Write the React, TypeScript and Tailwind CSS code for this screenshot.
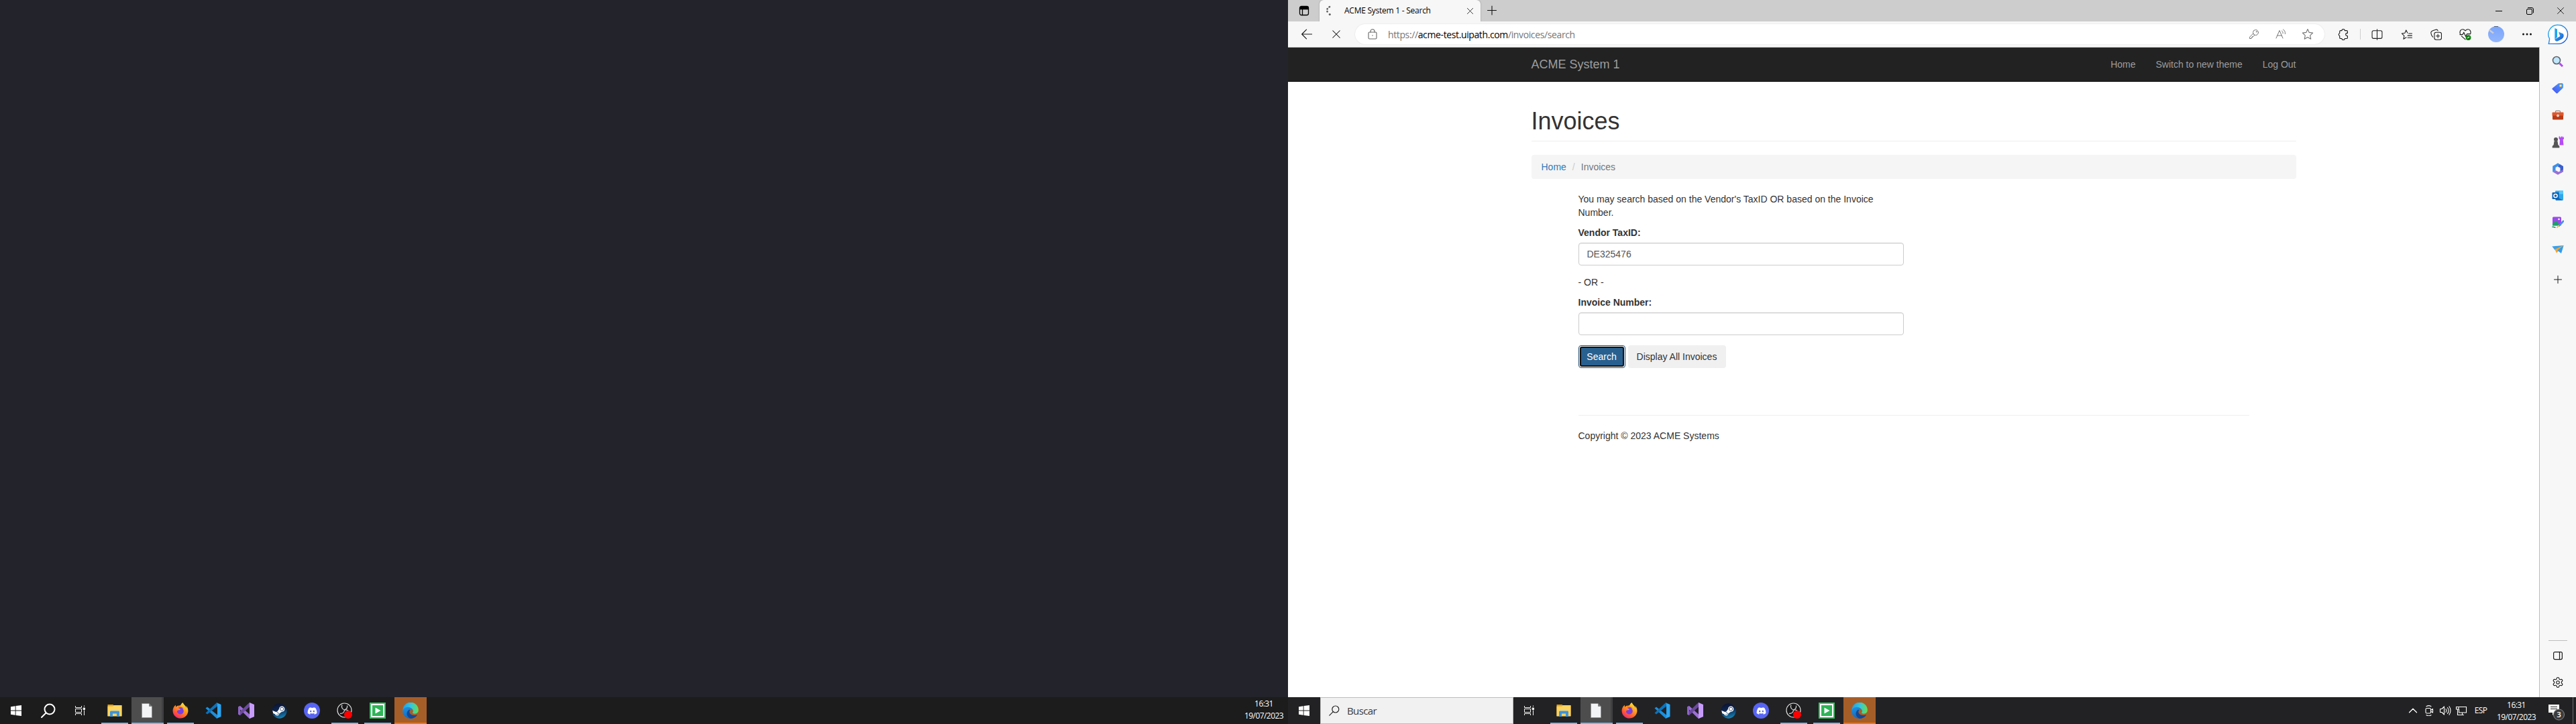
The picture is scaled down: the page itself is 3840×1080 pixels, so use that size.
import type { ReactNode } from "react";
import { FaDiscord, FaSteam, FaFirefoxBrowser } from "react-icons/fa";
import { Settings } from "lucide-react";

type SvgProps = { size?: number; children: ReactNode; color?: string; box?: number; w?: number };

function Line({ size = 16, box = 16, color = "#1b1b1b", w = 1, children }: SvgProps) {
  return (
    <svg width={size} height={size} viewBox={`0 0 ${box} ${box}`} fill="none" stroke={color} strokeWidth={w} strokeLinecap="round" strokeLinejoin="round">
      {children}
    </svg>
  );
}

function Art({ size = 24, box = 24, children }: SvgProps) {
  return (
    <svg width={size} height={size} viewBox={`0 0 ${box} ${box}`}>
      {children}
    </svg>
  );
}

function Gradients() {
  return (
    <svg width="0" height="0" className="absolute">
      <defs>
        <linearGradient id="edgeTop" x1="0" y1="0.4" x2="1" y2="0.5">
          <stop offset="0" stopColor="#1f9fe6" />
          <stop offset="0.5" stopColor="#35c6dc" />
          <stop offset="1" stopColor="#62de55" />
        </linearGradient>
        <linearGradient id="edgeLow" x1="0.2" y1="0" x2="0.6" y2="1">
          <stop offset="0" stopColor="#1d8fe0" />
          <stop offset="1" stopColor="#1565b8" />
        </linearGradient>
        <linearGradient id="fire" x1="0.8" y1="0" x2="0.2" y2="1">
          <stop offset="0" stopColor="#fff04a" />
          <stop offset="0.4" stopColor="#ff9a1f" />
          <stop offset="0.75" stopColor="#ff4f3a" />
          <stop offset="1" stopColor="#e8218a" />
        </linearGradient>
        <linearGradient id="steam" x1="0.3" y1="0" x2="0.6" y2="1">
          <stop offset="0" stopColor="#0c1230" />
          <stop offset="0.5" stopColor="#0d2a55" />
          <stop offset="1" stopColor="#1585b8" />
        </linearGradient>
        <linearGradient id="bing" x1="0" y1="0" x2="1" y2="1">
          <stop offset="0" stopColor="#37bdf5" />
          <stop offset="1" stopColor="#1b4fd0" />
        </linearGradient>
        <linearGradient id="tag" x1="1" y1="0" x2="0" y2="1">
          <stop offset="0" stopColor="#4aa3ff" />
          <stop offset="1" stopColor="#4a4ff0" />
        </linearGradient>
        <linearGradient id="avatar" x1="0" y1="0" x2="0" y2="1">
          <stop offset="0" stopColor="#7aa5fb" />
          <stop offset="1" stopColor="#94b6fb" />
        </linearGradient>
      </defs>
    </svg>
  );
}

/* ---------- taskbar ---------- */

const Windows = () => (
  <Art size={16} box={16}>
    <g fill="#fff">
      <path d="M0 2.2 6.7 1.3V7.5H0zM7.6 1.1 16 0v7.5H7.6zM0 8.4h6.7v6.3L0 13.8zM7.6 8.4H16V16l-8.4-1.1z" />
    </g>
  </Art>
);
const TaskView = () => (
  <Line size={18} box={18} color="#f5f5f5">
    <path d="M1.5 2v2.5h9V2M1.5 6.500h9v5h-9zM1.500 16v-2.500h9V16M14.500 1.500v1.500M14.500 8.500V16" strokeLinecap="butt" strokeLinejoin="miter" />
    <rect x="13.500" y="5" width="2" height="2.500" fill="#f5f5f5" />
  </Line>
);
const Explorer = () => (
  <Art>
    <path d="M1.500 3h8l1.500 1.500h11.500V20h-21z" fill="#e3a013" />
    <path d="M1.500 5.500h8l1-1.500h12V20.500h-21z" fill="#ffd45f" />
    <path d="M5 21v-7.500l1.500-1.500h11l1.500 1.500V21h-4v-4.500H9V21z" fill="#3f93d8" />
    <path d="M6.500 12h11l1 1h-13z" fill="#7cbcf0" />
  </Art>
);
const Doc = () => (
  <Art>
    <path d="M4.500 1.500h11l4 4v17h-15z" fill="#f3f4f5" stroke="#8c8c8c" strokeWidth="0.700" />
    <path d="M15.500 1.500v4h4z" fill="#777" stroke="#555" strokeWidth="0.500" />
  </Art>
);
const Firefox = () => (
  <span className="relative flex">
    <svg width="24" height="24" viewBox="0 0 24 24" className="absolute">
      <circle cx="12" cy="13.500" r="9.500" fill="#ff7a28" />
      <circle cx="12" cy="13" r="6" fill="#7a3fe0" />
    </svg>
    <FaFirefoxBrowser size={24} fill="url(#fire)" className="relative" />
  </span>
);
const Code = () => (
  <Art>
    <path d="M.5 8.500 3 6.500l15 12V24l-1-.3z" fill="#1d8fdc" />
    <path d="M.5 15.500 3 17.500l15-12V0l-1 .3z" fill="#0b73bb" />
    <path d="M17 .2 23.500 3v18L17 23.800c.8-.5 1-1 1-1.800V2c0-.8-.2-1.300-1-1.800z" fill="#2ba6f2" />
  </Art>
);
const VisualStudio = () => (
  <Art>
    <path d="M0 6.500 3 5l15 13.500V24l-1.500-.3L3 10.500v3L0 17.500z" fill="#9c6fd6" />
    <path d="M0 17.500 3 19 18 5.500V0l-1.500.3L0 16z" fill="#6b4a9c" />
    <path d="M0 6.500 3 5v14l-3-1.500z" fill="#8d63c4" />
    <path d="M17 0l7 3v18l-7 3z" fill="#c79bfa" />
  </Art>
);
const Steam = () => (
  <span className="relative flex">
    <svg width="23" height="23" viewBox="0 0 24 24" className="absolute">
      <circle cx="12" cy="12" r="10.500" fill="#fff" />
    </svg>
    <FaSteam size={23} fill="url(#steam)" className="relative" />
  </span>
);
const Discord = () => (
  <span className="flex size-6 items-center justify-center rounded-full bg-[#5865f2] text-white">
    <FaDiscord size={15} />
  </span>
);
const Obs = () => (
  <Art>
    <circle cx="11.500" cy="11.500" r="10.500" fill="#17171a" stroke="#d8d8d8" strokeWidth="1.200" />
    <g fill="none" stroke="#c9c9c9" strokeWidth="1.300">
      <path d="M8 3.500c-1.500 3 0 6.500 3.500 7.500 3-.5 6 .5 7.500 4" />
      <path d="M11.500 11c-.2 3-2.500 5.500-6.500 5.500M11.500 11c3-1 4.500-3.500 4-6.500" />
    </g>
    <circle cx="17" cy="18" r="6" fill="#fe0000" />
  </Art>
);
const Recorder = () => (
  <Art>
    <rect width="24" height="24" fill="#2fb457" />
    <path d="M0 0h24L0 24z" fill="#3cc466" />
    <rect x="3" y="3" width="18" height="18" fill="#2fb457" stroke="#fff" strokeWidth="2" />
    <path d="M8.500 7.500 16.500 12l-8 4.500z" fill="#fff" />
  </Art>
);
const Edge = () => (
  <Art>
    <path d="M.5 11A11.600 11.600 0 0 1 23.800 11.500c0 3.300-2.600 5.200-5.500 5.200-2.800 0-3.700-1.200-2.900-2.200C17 12 14.500 7.500 9.500 7.500 5 7.500 2 9.500.5 13z" fill="url(#edgeTop)" />
    <path d="M.2 13C1 8.500 5 6.500 8.500 6.700c3.500.2 5.700 2.300 6 4.300-2-.8-4.800 1.200-4.800 4 0 4 4.500 6.500 11.800 3.500C19 22 15.500 24 12 24 5.500 24 0 19 .2 13z" fill="url(#edgeLow)" />
    <path d="M10 10.500c-3.500 2-5 7.500-1.500 11 1.500 1.500 3 2.300 4.500 2.300 4-.3 7-2.300 8.800-5 .3-.6-.1-.8-.6-.6-4 1.700-8.200.8-10.200-2.200-1-1.700-.8-3.500.5-4.800z" fill="#10489a" />
  </Art>
);

type AppEntry = { icon: () => ReactNode; state?: "open" | "active" | "alert" };
const apps: AppEntry[] = [
  { icon: Explorer, state: "open" },
  { icon: Doc, state: "active" },
  { icon: Firefox, state: "open" },
  { icon: Code },
  { icon: VisualStudio },
  { icon: Steam },
  { icon: Discord },
  { icon: Obs, state: "open" },
  { icon: Recorder, state: "open" },
  { icon: Edge, state: "alert" },
];

function Apps() {
  return (
    <div className="ml-[3px] flex gap-px">
      {apps.map(({ icon: Icon, state }, i) => (
        <div
          key={i}
          className={`flex h-10 w-12 flex-col items-center ${
            state === "active" ? "border-r-[3px] border-[#404042] bg-[#4d4d4e]" : state === "alert" ? "bg-[#a65e28]" : ""
          }`}
        >
          <div className="flex h-[38px] items-center pt-0.5">
            <Icon />
          </div>
          <div
            className={`h-0.5 ${
              state === "open"
                ? "w-10 bg-[#76b9ed]"
                : state === "active"
                  ? "-mr-[3px] w-12 bg-[#76b9ed]"
                  : state === "alert"
                    ? "w-12 bg-[#fd7500]"
                    : "w-0"
            }`}
          />
        </div>
      ))}
    </div>
  );
}

function Clock() {
  return (
    <div className="flex w-[72px] flex-col items-center pt-px text-[12px] leading-[18px] tracking-[-0.56px] text-white">
      <span>16:31</span>
      <span>19/07/2023</span>
    </div>
  );
}

const Slot = ({ w, children }: { w: string; children: ReactNode }) => (
  <div className={`flex shrink-0 items-center justify-center ${w}`}>{children}</div>
);

function LeftMonitor() {
  return (
    <div className="flex w-[1920px] flex-col bg-[#23232c]">
      <div className="flex-1" />
      <div className="flex h-10 bg-[#1c1c1c]">
        <Slot w="w-12"><Windows /></Slot>
        <Slot w="w-12">
          <Line size={24} box={24} color="#fff" w={2}>
            <circle cx="14" cy="10" r="7.500" />
            <path d="M8.500 15.500 2 22" />
          </Line>
        </Slot>
        <Slot w="w-12"><TaskView /></Slot>
        <Apps />
        <div className="ml-auto">
          <Clock />
        </div>
      </div>
    </div>
  );
}

function RightTaskbar() {
  return (
    <div className="flex h-10 bg-[#222224]">
      <Slot w="w-12"><Windows /></Slot>
      <div className="flex w-72 items-center border border-[#bcbcbc] bg-[#f1f1f1] pl-3">
        <Line size={16} color="#222" w={1.2}>
          <circle cx="9.800" cy="6" r="5" />
          <path d="M6.300 9.700.8 15.200" />
        </Line>
        <span className="ml-[11px] text-[15px] tracking-[-0.6px] text-[#3a3a3a]">Buscar</span>
      </div>
      <Slot w="w-12"><TaskView /></Slot>
      <Apps />
      <div className="ml-auto flex items-center">
        <Slot w="w-6">
          <Line color="#fff" w={1.300}><path d="M2.500 10.800 8 5.300l5.500 5.500" /></Line>
        </Slot>
        <Slot w="w-6">
          <Line color="#fff" w={1.100}>
            <rect x="3" y="4.500" width="7.500" height="7.500" rx="1.500" />
            <path d="M10.500 7.500 13.500 5.500v5.500l-3-2M4 1.700c2-1.200 5-1.200 7 0M4 14.700c2 1.200 5 1.200 7 0" />
          </Line>
        </Slot>
        <Slot w="w-6">
          <Line size={18} box={18} color="#fff" w={1.100}>
            <path d="M1.500 6.500H4L7.500 3v12L4 11.500H1.500zM10 6.500c1 1.500 1 3.500 0 5M12.500 4.500c2 2.500 2 6.500 0 9M15 2.800c2.600 3.600 2.600 8.800 0 12.400" />
          </Line>
        </Slot>
        <Slot w="w-6">
          <Line size={18} box={18} color="#fff" w={1.100}>
            <path d="M6 3.500h10.500v8.500h-11V7M1.500 3.500H5v3.500H1.500zM3.500 7v8.500h9M10.500 12v3" strokeLinejoin="miter" />
          </Line>
        </Slot>
        <span className="w-[34px] text-center text-[12px] tracking-[-0.6px] text-white">ESP</span>
        <Clock />
        <div className="flex w-12 pl-[7px]">
          <svg width="30" height="30" viewBox="0 0 30 30">
            <path d="M5 6h16v12h-6l-4 4v-4H5z" fill="#fff" />
            <path d="M8 9.500h10M8 12.500h10" stroke="#222" strokeWidth="1" />
            <circle cx="20.500" cy="21" r="8" fill="#3b3b3d" stroke="#8a8a8a" />
            <text x="20.500" y="25" textAnchor="middle" fontSize="11.500" fontWeight="600" fill="#fff">3</text>
          </svg>
        </div>
        <div className="mr-1 h-10 w-px bg-[#6d6d6f]" />
      </div>
    </div>
  );
}

/* ---------- browser chrome ---------- */

const CloseX = ({ size }: { size: number }) => (
  <Line size={size} w={1.200} color="#111"><path d="M2 2l12 12M14 2 2 14" /></Line>
);

function TabStrip() {
  return (
    <div className="flex h-8 bg-[#cdcdcd]">
      <div className="flex w-[47px] items-center justify-center">
        <Line color="#000" w={1.300}>
          <rect x="1.500" y="1.500" width="13" height="13" rx="2.500" />
          <path d="M5.500 5.500v9M1.500 5.500h13" />
          <path d="M3 3.500h10" strokeWidth="3" />
        </Line>
      </div>
      <div className="flex w-[240px] items-center rounded-t-[6px] bg-[#f7f7f7] pl-2 shadow-[0_0_2px_rgba(0,0,0,0.35)]">
        <Line color="#5f5f5f" w={2.600}>
          <path d="M7 2.200l-.5.200M3.700 5.200l-.2.300M3.500 9l.1.300" />
          <path d="M7.200 13.500h.1" strokeWidth="3" />
        </Line>
        <span className="ml-[13px] w-[182px] whitespace-nowrap text-[12px] tracking-[-0.25px] text-black">ACME System 1 - Search</span>
        <CloseX size={11} />
      </div>
      <div className="ml-[9px] flex items-center">
        <Line w={1.100} color="#111"><path d="M8 1v13M1.500 7.500h13" /></Line>
      </div>
      <div className="ml-auto flex">
        <Slot w="w-[46px]"><Line size={10} box={10} color="#000"><path d="M0 5.500h10" /></Line></Slot>
        <Slot w="w-[46px]">
          <Line size={11} box={11} color="#000">
            <rect x="0.500" y="2.500" width="8" height="8" rx="1.500" />
            <path d="M2.500.5h5.500a2.500 2.500 0 0 1 2.500 2.500V8" />
          </Line>
        </Slot>
        <Slot w="w-[46px]"><CloseX size={12} /></Slot>
      </div>
    </div>
  );
}

const starPath = "M8 1.300 10 5.700l4.800.6-3.500 3.300.9 4.800L8 12l-4.200 2.400.9-4.800L1.200 6.300 6 5.700z";

function Toolbar() {
  return (
    <div className="flex h-[38px] items-center bg-[#f7f7f7]">
      <div className="flex w-[100px] items-center pl-5">
        <Line size={16} w={1.200}><path d="M.7 8h15M7.500 1.200.7 8l6.800 6.800" /></Line>
        <div className="ml-[29px]"><CloseX size={14} /></div>
      </div>
      <div className="flex h-[30px] w-[1445px] items-center rounded-full bg-white pl-[18px] shadow-[0_0_2px_rgba(0,0,0,0.12)]">
        <Line color="#666" w={1.100}>
          <rect x="2" y="5" width="12" height="10" rx="1.500" />
          <path d="M5 5V3.800a3 3 0 0 1 6 0V5M8 9.500v.8" />
        </Line>
        <span className="ml-[15px] whitespace-nowrap text-[14px] tracking-[-0.38px] text-[#767676]">
          https://<span className="text-black">acme-test.uipath.com</span>/invoices/search
        </span>
        <div className="ml-auto flex pr-[5px]">
          <Slot w="w-10">
            <Line color="#767676">
              <circle cx="10.500" cy="5.500" r="4" />
              <path d="M6.800 7 1.500 12.300V14.500H4V13h1.500v-1.500H7L8.800 9.300" />
              <circle cx="11.700" cy="4.300" r="0.500" />
            </Line>
          </Slot>
          <Slot w="w-10">
            <Line color="#767676"><path d="M1 14 6 2.500 11 14M2.800 10h6.400M9.500 3c1.200.8 1.800 2.200 1.600 3.800M11.500 1c2.200 1.300 3.300 3.700 2.900 6.500" /></Line>
          </Slot>
          <Slot w="w-10"><Line size={18} color="#767676"><path d={starPath} /></Line></Slot>
        </div>
      </div>
      <div className="ml-[6px] flex items-center">
        <Slot w="w-11">
          <Line size={18}>
            <path d="M4.500 3.200H6.200a1.900 1.900 0 0 1 3.800 0h2.500a1.200 1.200 0 0 1 1.200 1.200v2.200h-.6a1.800 1.800 0 0 0 0 3.600h.6v2.400a1.200 1.200 0 0 1-1.200 1.200H10a1.900 1.900 0 0 1-3.800 0H4.500a1.200 1.200 0 0 1-1.200-1.200v-2.400a1.900 1.900 0 0 1 0-3.600V4.400a1.200 1.200 0 0 1 1.200-1.200z" />
          </Line>
        </Slot>
        <div className="ml-[3px] h-4 w-px bg-[#cfcfcf]" />
        <Slot w="w-[48px]">
          <Line size={17}><path d="M7 2.500H3a2 2 0 0 0-2 2v7a2 2 0 0 0 2 2h4M9 2.500h4a2 2 0 0 1 2 2v7a2 2 0 0 1-2 2H9M8 .8v14.400" /></Line>
        </Slot>
        <Slot w="w-10">
          <Line size={17}><path d="M9.500 9.500h6M9.500 12.500h6M11 6.500h4.500M7.500 12 3.700 14.300l.9-4.500L1.200 6.500l4.400-.6L7.300 1.800l2 4" /></Line>
        </Slot>
        <Slot w="w-12">
          <Line size={17}>
            <rect x="5.500" y="5" width="10" height="10.300" rx="2.500" />
            <path d="M10.500 7.500v5M8 10.200h5M3.500 11.500C2 10.500.5 6.500.8 4.800 1 3.500 2 3 3.300 2.500L7.500 1.200c1.500-.4 2.500.2 3 1.500" />
          </Line>
        </Slot>
        <Slot w="w-10">
          <Line size={18}>
            <path d="M1.200 7.500C0 3.500 2.500 1.500 4.500 1.500 6 1.500 7 2.300 8 3.500c1-1.200 2-2 3.500-2 2 0 4.500 2 3.300 6M.8 8.500H4.500L6 5.500l2.500 5.500 1.700-3.300h4.500M3 10.500l5 4.500" />
            <circle cx="12" cy="12.500" r="3" fill="#0f7b0f" stroke="#0f7b0f" />
            <path d="M11 13 13 11.800" stroke="#fff" />
          </Line>
        </Slot>
        <Slot w="w-[52px]">
          <Art>
            <circle cx="12" cy="12" r="12" fill="url(#avatar)" />
            <path d="M2 6 8 10.500" stroke="#c9cdd6" strokeWidth="2.500" />
            <path d="M9 .4h6" stroke="#4f5868" />
          </Art>
        </Slot>
        <Slot w="w-10">
          <Line><g fill="#111" stroke="none"><circle cx="2.500" cy="8" r="1.500" /><circle cx="8" cy="8" r="1.500" /><circle cx="13.500" cy="8" r="1.500" /></g></Line>
        </Slot>
        <Slot w="w-[53px]">
          <Art size={31} box={31}>
            <path d="M15.500 1.200a14 14 0 1 1 0 28.200H1.300L2.600 22A14 14 0 0 1 15.500 1.200z" fill="#fff" stroke="url(#bing)" strokeWidth="1.400" />
            <path d="M10.300 6l3.700 1.500v12l-3.700 3.200z" fill="#20a4ef" />
            <path d="M16 11.500l7 3c1.500 3 .5 6-2.500 7.800L14.500 25.500c-2 .5-4-.8-4.200-2.800l8-4.700z" fill="url(#bing)" />
          </Art>
        </Slot>
      </div>
    </div>
  );
}

const sidebar: (() => ReactNode)[] = [
  () => (
    <>
      <path d="M11.500 11.500 16 16" stroke="#b04af0" strokeWidth="3" />
      <circle cx="7" cy="7" r="5.500" fill="#bfe6fb" stroke="#5f6368" strokeWidth="1.600" />
    </>
  ),
  () => (
    <>
      <path d="M10 1.200 15.500 1l1.500 1.500-.2 5.500L8.500 16a1.500 1.500 0 0 1-2 0L.9 10.500a1.500 1.500 0 0 1 0-2z" fill="url(#tag)" />
      <circle cx="13" cy="4.800" r="1.900" fill="#ffd23c" />
      <circle cx="13" cy="4.800" r="0.800" fill="#fff" />
    </>
  ),
  () => (
    <>
      <path d="M5.500 5V3.500c0-.8.4-1.200 1.200-1.200h4.600c.8 0 1.200.4 1.200 1.200V5" fill="none" stroke="#8a8a8a" strokeWidth="1.300" />
      <rect x="0.500" y="4.500" width="17" height="5.500" rx="1" fill="#e0562b" />
      <path d="M1 9.500h16v5a1 1 0 0 1-1 1H2a1 1 0 0 1-1-1z" fill="#bb3a14" />
      <circle cx="9" cy="9.500" r="1.900" fill="#d9d9d9" />
    </>
  ),
  () => (
    <>
      <path d="M10.500.5h2v1.500h1.500V.5h2v1.500h1.500V.5H18V4l-1.300 1.500.8 8h-6l.5-8L10.500 4z" fill="#b44cf5" />
      <g fill="#555">
        <circle cx="6" cy="5" r="3" />
        <path d="M3.500 7.500h5l.8 5.500 2 2v2.500H.7V15l2-2z" />
      </g>
    </>
  ),
  () => (
    <>
      <path d="M9 .3 1.200 4.800v8.700L5.500 11V7L12.500 2.500z" fill="#3d8fe8" />
      <path d="M12 2 17 5v8l-4.500 2.500V7.500L8.500 5.200z" fill="#3a5fcf" />
      <path d="M1.200 13.300 9 17.800l8-4.800V10l-7 3.500L5.500 11z" fill="#9b6fd8" />
    </>
  ),
  () => (
    <>
      <rect x="5" y="1.500" width="12" height="14" rx="1" fill="#2fa8ea" />
      <path d="M11 1.500h6v5h-6z" fill="#5cc8fa" />
      <path d="M5 9.500l12 6.500H6z" fill="#1472c2" />
      <rect x="0.500" y="4" width="10" height="10" rx="1" fill="#0a62b8" />
      <circle cx="5.500" cy="9" r="2.600" fill="none" stroke="#fff" strokeWidth="1.500" />
    </>
  ),
  () => (
    <>
      <rect x="1" y="0.500" width="13" height="13" rx="1.500" fill="#9a4bea" />
      <circle cx="10.500" cy="4" r="1.300" fill="#fff" />
      <path d="M1 10.500 6.500 6l6 7.500H1z" fill="#1da06a" />
      <path d="M17 7 11 13.500" stroke="#4a8df5" strokeWidth="2.700" strokeLinecap="round" />
      <path d="M11.500 12.500 9 16.500c-.8.8-1.500.8-2 .5l2-4z" fill="#ffb92e" />
      <path d="M.5 16c2-2 3 1 5 0" stroke="#1da06a" fill="none" strokeWidth="1.500" />
    </>
  ),
  () => (
    <>
      <path d="M.3 4.500 17.700 3 4.500 10z" fill="#3aa0ec" />
      <path d="M4.300 9 17.700 3 7 14.500z" fill="#f3a42c" />
      <path d="M17.700 3 8.300 10.500l5.700 4.500z" fill="#2f9df0" />
    </>
  ),
];

function Sidebar() {
  return (
    <div className="flex w-[54px] flex-col items-center bg-[#f7f7f7] pt-[1.5px]">
      {sidebar.map((Icon, i) => (
        <div key={i} className="flex h-10 items-center">
          <Art size={18} box={18}><Icon /></Art>
        </div>
      ))}
      <div className="mt-[5px] flex h-10 items-center">
        <Line size={12} box={12}><path d="M6 .5v11M.5 6h11" /></Line>
      </div>
      <div className="mt-auto h-px w-7 bg-[#bdbdbd]" />
      <div className="flex h-11 items-center">
        <Line size={14} box={14} w={1.200}><rect x="0.600" y="1.600" width="12.800" height="11" rx="2" /><path d="M9.500 1.600v11" /></Line>
      </div>
      <div className="mb-[4px] flex h-9 items-center">
        <Settings size={18} strokeWidth={1.500} color="#1b1b1b" />
      </div>
    </div>
  );
}

/* ---------- web page ---------- */

function Page() {
  const field = "h-[34px] w-[485px] rounded-[4px] border border-[#ccc] bg-white px-3 text-[14px] text-[#555] shadow-[inset_0_1px_1px_rgba(0,0,0,0.075)]";
  return (
    <div className="flex w-[1866px] flex-col border-t border-r border-[#b9bdb9] bg-white font-['Liberation_Sans',Arial,sans-serif] text-[14px] leading-5 text-[#333]">
      <nav className="h-[51px] border-b border-[#080808] bg-[#222] text-[#9d9d9d]">
        <div className="mx-auto flex h-[50px] w-[1140px] items-center justify-between">
          <span className="text-[18px]">ACME System 1</span>
          <div className="flex gap-[30px]">
            <span>Home</span>
            <span>Switch to new theme</span>
            <span>Log Out</span>
          </div>
        </div>
      </nav>
      <main className="mx-auto w-[1140px] pt-[39px]">
        <h1 className="mb-5 border-b border-[#eee] pb-[10px] text-[36px] leading-[39px]">Invoices</h1>
        <div className="mb-5 flex h-9 items-center rounded-[4px] bg-[#f5f5f5] px-[15px] text-[#777]">
          <span className="text-[#337ab7]">Home</span>
          <span className="px-[9px] text-[#ccc]">/</span>
          <span>Invoices</span>
        </div>
        <div className="px-[70px]">
          <p className="mb-[10px] w-[470px]">You may search based on the Vendor's TaxID OR based on the Invoice Number.</p>
          <label className="mb-[5px] block font-bold">Vendor TaxID:</label>
          <input className={`${field} mb-[15px] block`} defaultValue="DE325476" />
          <p className="mb-[10px]">- OR -</p>
          <label className="mb-[5px] block font-bold">Invoice Number:</label>
          <input className={`${field} mb-[15px] block`} />
          <div className="flex gap-1">
            <button className="h-[34px] w-[70px] rounded-[4px] border border-[#204d74] bg-white p-px text-white">
              <span className="flex h-full w-full items-center justify-center rounded-[3px] border-2 border-[#101010] bg-[#286090]">Search</span>
            </button>
            <button className="h-[34px] w-[146px] rounded-[4px] bg-[#f0f0f0]">Display All Invoices</button>
          </div>
          <hr className="mt-[70px] mb-5 border-[#eee]" />
          <p>Copyright © 2023 ACME Systems</p>
        </div>
      </main>
    </div>
  );
}

export default function App() {
  return (
    <div className="flex h-[1080px] w-[3840px] overflow-hidden font-['Open_Sans','Noto_Sans',sans-serif]">
      <Gradients />
      <LeftMonitor />
      <div className="flex w-[1920px] flex-col">
        <TabStrip />
        <Toolbar />
        <div className="flex flex-1">
          <Page />
          <Sidebar />
        </div>
        <RightTaskbar />
      </div>
    </div>
  );
}
